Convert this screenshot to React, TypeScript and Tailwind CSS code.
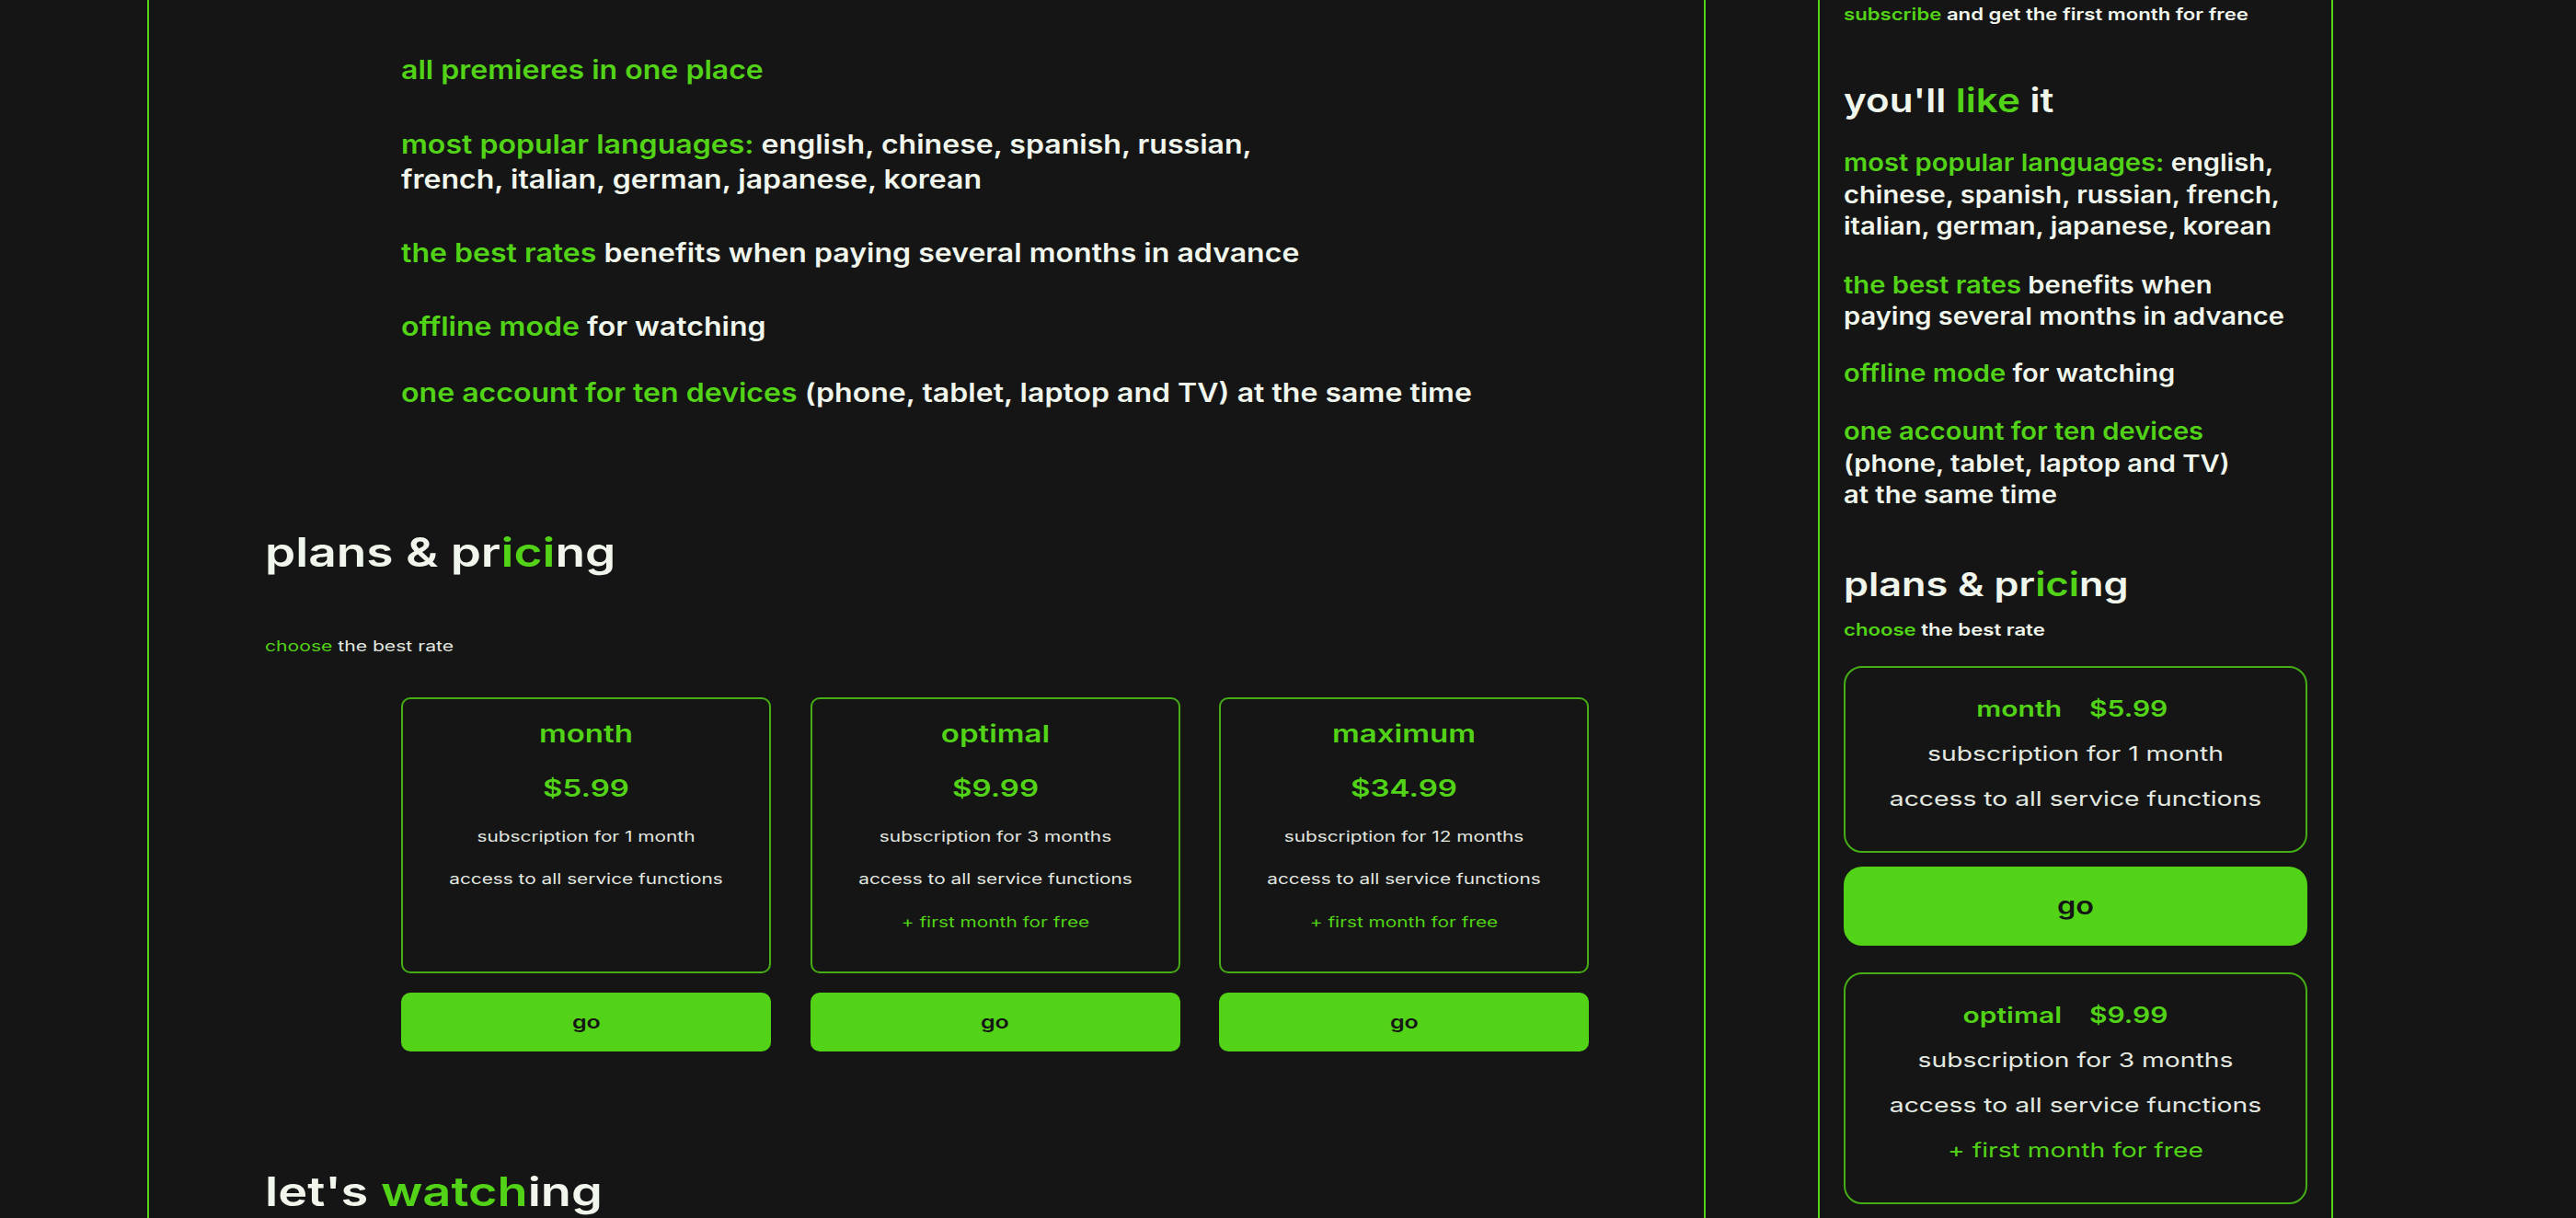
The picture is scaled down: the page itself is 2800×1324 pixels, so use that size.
import React from "react";

const G = ({ children }: { children: React.ReactNode }) => <span className="text-[#52d317]">{children}</span>;

const plans = [
  { name: "month", price: "$5.99", sub: "subscription for 1 month", free: false },
  { name: "optimal", price: "$9.99", sub: "subscription for 3 months", free: true },
  { name: "maximum", price: "$34.99", sub: "subscription for 12 months", free: true },
];

function Desktop() {
  const list = "origin-left scale-x-[1.145] whitespace-nowrap text-[28px] leading-[38px] font-semibold";
  return (
    <section className="w-[1694px] shrink-0 border-x-2 border-[#52d317] pt-[57px] pl-[126px]">
      <div className="pl-[148px]">
        <p className={list}><G>all premieres in one place</G></p>
        <p className={`${list} mt-[43px]`}>
          <G>most popular languages:</G> english, chinese, spanish, russian,<br />french, italian, german, japanese, korean
        </p>
        <p className={`${list} mt-[42px]`}><G>the best rates</G> benefits when paying several months in advance</p>
        <p className={`${list} mt-[42px]`}><G>offline mode</G> for watching</p>
        <p className={`${list} mt-[34px]`}><G>one account for ten devices</G> (phone, tablet, laptop and TV) at the same time</p>
      </div>
      <h2 className="mt-[124px] origin-left scale-x-[1.21] whitespace-nowrap text-[44px] leading-[60px] font-semibold">
        plans &amp; pr<G>ici</G>ng
      </h2>
      <p className="mt-[58px] origin-left scale-x-[1.32] whitespace-nowrap text-[16px] leading-[28px] text-[#e3e8e0]"><G>choose</G> the best rate</p>
      <div className="mt-[42px] ml-[148px] flex gap-[42.5px]">
        {plans.map((p) => (
          <div key={p.name} className="w-[402px]">
            <div className="h-[300px] rounded-[10px] border-2 border-[#45ad15] pt-[18px] text-center">
              <p className="scale-x-[1.27] text-[26px] leading-[40px] font-semibold text-[#52d317]">{p.name}</p>
              <p className="mt-[19px] scale-x-[1.27] text-[26px] leading-[40px] font-semibold text-[#52d317]">{p.price}</p>
              <p className="mt-[18px] scale-x-[1.3] text-[16px] leading-[28px] text-[#e3e8e0]">{p.sub}</p>
              <p className="mt-[18px] scale-x-[1.3] text-[16px] leading-[28px] text-[#e3e8e0]">access to all service functions</p>
              {p.free && <p className="mt-[19px] scale-x-[1.3] text-[16px] leading-[28px] text-[#52d317]">+ first month for free</p>}
            </div>
            <button className="mt-[21px] flex h-[64px] w-full items-center justify-center rounded-[10px] bg-[#52d317] text-[20px] font-semibold text-[#151515]">
              <span className="scale-x-[1.25]">go</span>
            </button>
          </div>
        ))}
      </div>
      <h2 className="mt-[122px] origin-left scale-x-[1.23] whitespace-nowrap text-[44px] leading-[60px] font-semibold">
        let's <G>watch</G>ing
      </h2>
    </section>
  );
}

function MobileCard({ name, price, sub, free }: { name: string; price: string; sub: string; free: boolean }) {
  const line = "scale-x-[1.285] text-[22px] leading-[49px]";
  return (
    <div className="rounded-[20px] border-2 border-[#45ad15] pt-[20px] pb-[32px] text-center">
      <div className="grid grid-cols-2 gap-[30px] text-[24px] leading-[49px] font-semibold text-[#52d317]">
        <span className="origin-right scale-x-[1.25] text-right">{name}</span>
        <span className="origin-left scale-x-[1.25] text-left">{price}</span>
      </div>
      <p className={`${line} text-[#e3e8e0]`}>{sub}</p>
      <p className={`${line} text-[#e3e8e0]`}>access to all service functions</p>
      {free && <p className={`${line} text-[#52d317]`}>+ first month for free</p>}
    </div>
  );
}

function Mobile() {
  const list = "origin-left scale-x-[1.12] whitespace-nowrap text-[26px] leading-[34.5px] font-semibold";
  return (
    <section className="ml-[122px] w-[560px] shrink-0 border-x-2 border-[#52d317] px-[26px] pt-[2px]">
      <p className="origin-left scale-x-[1.23] whitespace-nowrap text-[18px] leading-[28px] font-semibold"><G>subscribe</G> and get the first month for free</p>
      <h2 className="mt-[54px] origin-left scale-x-[1.17] whitespace-nowrap text-[36px] leading-[50px] font-semibold">you'll <G>like</G> it</h2>
      <p className={`${list} mt-[26px]`}><G>most popular languages:</G> english,<br />chinese, spanish, russian, french,<br />italian, german, japanese, korean</p>
      <p className={`${list} mt-[29px]`}><G>the best rates</G> benefits when<br />paying several months in advance</p>
      <p className={`${list} mt-[27px]`}><G>offline mode</G> for watching</p>
      <p className={`${list} mt-[29px]`}><G>one account for ten devices</G><br />(phone, tablet, laptop and TV)<br />at the same time</p>
      <h2 className="mt-[54px] origin-left scale-x-[1.2] whitespace-nowrap text-[36px] leading-[50px] font-semibold">plans &amp; pr<G>ici</G>ng</h2>
      <p className="mt-[12px] origin-left scale-x-[1.23] whitespace-nowrap text-[18px] leading-[26px] font-semibold"><G>choose</G> the best rate</p>
      <div className="mt-[26px]">
        <MobileCard {...plans[0]} />
        <button className="mt-[15px] flex h-[86px] w-full items-center justify-center rounded-[20px] bg-[#52d317] text-[26px] font-semibold text-[#151515]">
          <span className="scale-x-[1.25]">go</span>
        </button>
        <div className="mt-[29px]"><MobileCard {...plans[1]} /></div>
      </div>
    </section>
  );
}

export default function App() {
  return (
    <div className="flex h-[1324px] w-[2800px] overflow-hidden bg-[#151515] pl-[160px] font-['Inter',sans-serif] text-[#f0f6ec]">
      <Desktop />
      <Mobile />
    </div>
  );
}
